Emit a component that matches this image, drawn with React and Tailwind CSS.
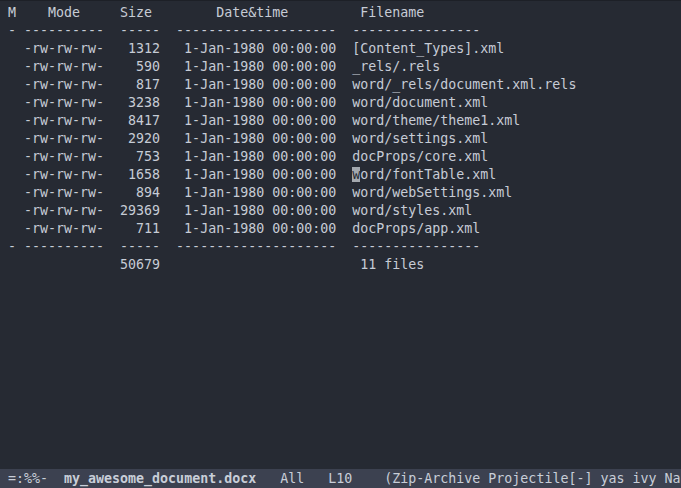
import React from "react";

const rows = [
  ["1312", "[Content_Types].xml"],
  ["590", "_rels/.rels"],
  ["817", "word/_rels/document.xml.rels"],
  ["3238", "word/document.xml"],
  ["8417", "word/theme/theme1.xml"],
  ["2920", "word/settings.xml"],
  ["753", "docProps/core.xml"],
  ["1658", "word/fontTable.xml"],
  ["894", "word/webSettings.xml"],
  ["29369", "word/styles.xml"],
  ["711", "docProps/app.xml"],
];

function pad(s, n) {
  return " ".repeat(Math.max(0, n - s.length)) + s;
}

export default function App() {
  const dash = "- ----------  -----  --------------------  ----------------";
  return (
    <div
      className="w-[681px] h-[488px] bg-[#262a33] text-[#c6ccd6] flex flex-col overflow-hidden"
      style={{ fontFamily: '"DejaVu Sans Mono", monospace' }}
    >
      <div className="h-[1px] bg-[#1d2027]" />
      <div className="flex-1 pt-[3px] pl-[8px] text-[13.3px] leading-[18px] whitespace-pre">
        <div>{"M    Mode     Size        Date&time         Filename"}</div>
        <div>{dash}</div>
        {rows.map(([size, name], i) => (
          <div key={i}>
            {"  -rw-rw-rw-  " + pad(size, 5) + "   1-Jan-1980 00:00:00  "}
            {i === 7 ? (
              <>
                <span className="bg-[#a3a8ae] text-[#262a33]">w</span>
                {name.slice(1)}
              </>
            ) : (
              name
            )}
          </div>
        ))}
        <div>{dash}</div>
        <div>{"              50679                         11 files"}</div>
      </div>
      <div className="h-[19px] bg-[#3c4150] text-[#c8ced8] pl-[8px] text-[13.3px] leading-[19px] whitespace-pre">
        {"=:%%-  "}
        <span className="font-bold">my_awesome_document.docx</span>
        {"   All   L10    (Zip-Archive Projectile[-] yas ivy Na"}
      </div>
    </div>
  );
}
